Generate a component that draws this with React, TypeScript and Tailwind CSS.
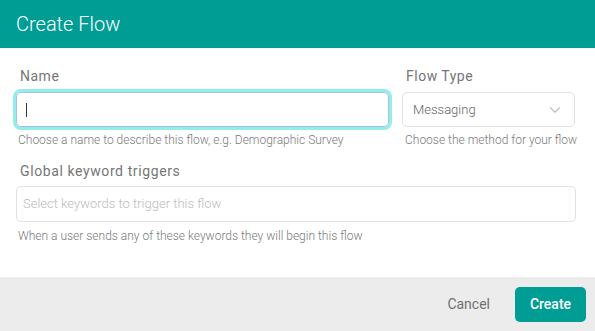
import { ChevronDown } from 'lucide-react'

export default function App() {
  return (
    <div className="w-[595px] h-[331px] bg-white flex flex-col font-['Roboto',sans-serif] overflow-hidden">
      <div className="h-12 bg-[#009d95] flex items-center px-4 shrink-0">
        <h1 className="text-[20px] font-light text-white leading-none">Create Flow</h1>
      </div>

      <div className="flex-1 pl-4 pr-[19px] pt-5">
        <div className="flex gap-[13px]">
          <div className="w-[373px]">
            <label className="block px-1 text-[14px] leading-4 tracking-[0.5px] text-[#767676]">Name</label>
            <div className="relative mt-2">
              <input
                className="w-full h-[35px] rounded-[5px] border border-[#a9bcf5] px-2.5 text-[14px] text-[#333] outline-none ring-[3px] ring-[#92efe8]"
                defaultValue=""
              />
              <span className="absolute left-[10px] top-[11px] w-px h-[14px] bg-[#333]" />
            </div>
            <p className="mt-1.5 px-0.5 text-[12px] font-light leading-[14px] text-[#7a7a7a] whitespace-nowrap">
              Choose a name to describe this flow, e.g. Demographic Survey
            </p>
          </div>
          <div className="w-[173px]">
            <label className="block px-1 text-[14px] leading-4 tracking-[0.5px] text-[#767676]">Flow Type</label>
            <div className="mt-2 h-[35px] rounded-[5px] border border-[#e2e2e2] flex items-center justify-between pl-2.5 pr-2.5">
              <span className="text-[13px] font-light text-[#666]">Messaging</span>
              <ChevronDown className="w-[18px] h-[18px] text-[#bdbdbd]" strokeWidth={1.5} />
            </div>
            <p className="mt-1.5 pl-[3px] text-[12px] font-light leading-[14px] text-[#7a7a7a] whitespace-nowrap">
              Choose the method for your flow
            </p>
          </div>
        </div>

        <label className="block mt-4 px-1 text-[14px] leading-4 tracking-[0.6px] text-[#767676]">Global keyword triggers</label>
        <div className="mt-[7px] h-9 rounded-[5px] border border-[#e2e2e2] flex items-center px-[6px]">
          <span className="text-[13px] font-light text-[#bcbcbc]">Select keywords to trigger this flow</span>
        </div>
        <p className="mt-[7px] px-0.5 text-[12px] font-light leading-[14px] text-[#7a7a7a] whitespace-nowrap">
          When a user sends any of these keywords they will begin this flow
        </p>
      </div>

      <div className="h-[54px] bg-[#ececec] flex items-center justify-end gap-[25px] pr-[9px] shrink-0">
        <button className="text-[14px] text-[#707070]">Cancel</button>
        <button className="w-[71px] h-[35px] rounded-[5px] bg-[#009d95] text-white text-[14px] font-medium">Create</button>
      </div>
    </div>
  )
}
